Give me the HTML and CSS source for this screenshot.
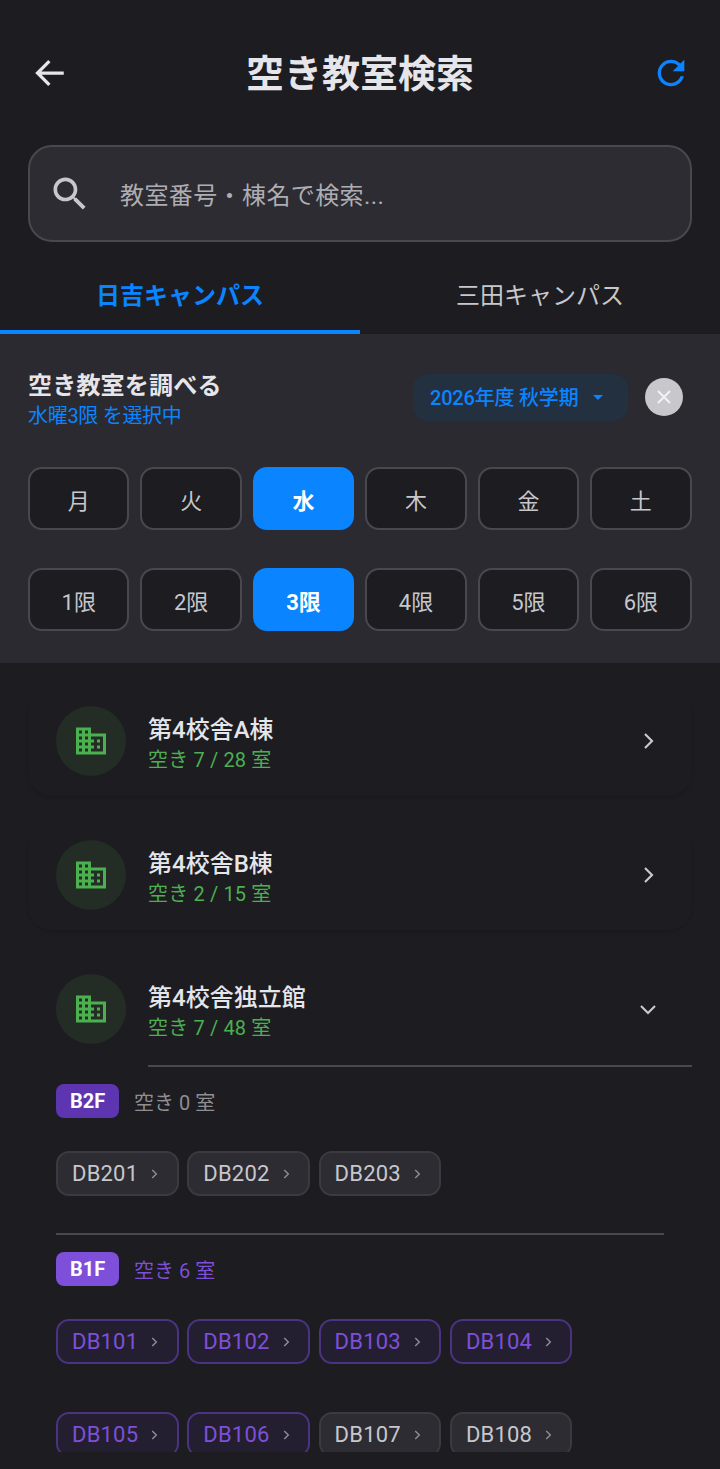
FILE: index.html
```html
<!DOCTYPE html>
<html lang="ja">
<head>
  <meta charset="UTF-8" />
  <meta name="viewport" content="width=device-width, initial-scale=1.0"/>
  <title>空き教室検索</title>
  <link rel="stylesheet" href="styles.css">
</head>
<body>
  <header class="topbar">
    <svg class="back-icon" viewBox="0 0 32 32"><path d="M27 16H6M15.5 6.5L6 16l9.5 9.5"/></svg>
    <h1>空き教室検索</h1>
    <svg class="refresh-icon" viewBox="0 0 24 24"><path d="M17.65 6.35C16.2 4.9 14.21 4 12 4c-4.42 0-7.99 3.58-7.99 8s3.57 8 7.99 8c3.73 0 6.84-2.55 7.73-6h-2.08c-.82 2.33-3.04 4-5.65 4-3.31 0-6-2.69-6-6s2.69-6 6-6c1.66 0 3.14.69 4.22 1.78L13 11h7V4l-2.35 2.35z"/></svg>
  </header>

  <div class="search">
    <svg class="search-icon" viewBox="0 0 24 24"><path d="M15.5 14h-.79l-.28-.27C15.41 12.59 16 11.11 16 9.5 16 5.91 13.09 3 9.5 3S3 5.91 3 9.5 5.91 16 9.5 16c1.61 0 3.09-.59 4.23-1.57l.27.28v.79l5 4.99L20.49 19l-4.99-5zm-6 0C7.01 14 5 11.99 5 9.5S7.01 5 9.5 5 14 7.01 14 9.5 11.99 14 9.5 14z"/></svg>
    <span>教室番号・棟名で検索...</span>
  </div>

  <nav class="tabs">
    <div class="tab active">日吉キャンパス</div>
    <div class="tab">三田キャンパス</div>
  </nav>

  <section class="panel">
    <div class="panel-head">
      <div class="panel-title">
        <h2>空き教室を調べる</h2>
        <p>水曜3限 を選択中</p>
      </div>
      <div class="term">2026年度 秋学期<i class="caret"></i></div>
      <div class="close">
        <svg viewBox="0 0 24 24"><path d="M6 6l12 12M18 6L6 18"/></svg>
      </div>
    </div>
    <div class="picker">
      <div class="pick">月</div>
      <div class="pick">火</div>
      <div class="pick on">水</div>
      <div class="pick">木</div>
      <div class="pick">金</div>
      <div class="pick">土</div>
    </div>
    <div class="picker">
      <div class="pick">1限</div>
      <div class="pick">2限</div>
      <div class="pick on">3限</div>
      <div class="pick">4限</div>
      <div class="pick">5限</div>
      <div class="pick">6限</div>
    </div>
  </section>

  <main class="list">
    <div class="card">
      <div class="card-head">
        <div class="bldg"><svg viewBox="0 0 24 24"><path d="M12 7V3H2v18h20V7H12zM6 19H4v-2h2v2zm0-4H4v-2h2v2zm0-4H4V9h2v2zm0-4H4V5h2v2zm4 12H8v-2h2v2zm0-4H8v-2h2v2zm0-4H8V9h2v2zm0-4H8V5h2v2zm10 12h-8v-2h2v-2h-2v-2h2v-2h-2V9h8v10zm-2-8h-2v2h2v-2zm0 4h-2v2h2v-2z"/></svg></div>
        <div class="card-text">
          <h3>第4校舎A棟</h3>
          <p>空き 7 / 28 室</p>
        </div>
        <svg class="chev" viewBox="0 0 24 24"><path d="M9 5l7 7-7 7"/></svg>
      </div>
    </div>

    <div class="card">
      <div class="card-head">
        <div class="bldg"><svg viewBox="0 0 24 24"><path d="M12 7V3H2v18h20V7H12zM6 19H4v-2h2v2zm0-4H4v-2h2v2zm0-4H4V9h2v2zm0-4H4V5h2v2zm4 12H8v-2h2v2zm0-4H8v-2h2v2zm0-4H8V9h2v2zm0-4H8V5h2v2zm10 12h-8v-2h2v-2h-2v-2h2v-2h-2V9h8v10zm-2-8h-2v2h2v-2zm0 4h-2v2h2v-2z"/></svg></div>
        <div class="card-text">
          <h3>第4校舎B棟</h3>
          <p>空き 2 / 15 室</p>
        </div>
        <svg class="chev" viewBox="0 0 24 24"><path d="M9 5l7 7-7 7"/></svg>
      </div>
    </div>

    <div class="card open">
      <div class="card-head">
        <div class="bldg"><svg viewBox="0 0 24 24"><path d="M12 7V3H2v18h20V7H12zM6 19H4v-2h2v2zm0-4H4v-2h2v2zm0-4H4V9h2v2zm0-4H4V5h2v2zm4 12H8v-2h2v2zm0-4H8v-2h2v2zm0-4H8V9h2v2zm0-4H8V5h2v2zm10 12h-8v-2h2v-2h-2v-2h2v-2h-2V9h8v10zm-2-8h-2v2h2v-2zm0 4h-2v2h2v-2z"/></svg></div>
        <div class="card-text">
          <h3>第4校舎独立館</h3>
          <p>空き 7 / 48 室</p>
        </div>
        <svg class="chev" viewBox="0 0 24 24"><path d="M5 9l7 7 7-7"/></svg>
      </div>
      <div class="card-rule"></div>

      <div class="floor">
        <div class="floor-head">
          <span class="badge b2">B2F</span>
          <span class="floor-count">空き 0 室</span>
        </div>
        <div class="rooms">
          <div class="room">DB201<svg viewBox="0 0 24 24"><path d="M9 5l7 7-7 7"/></svg></div>
          <div class="room">DB202<svg viewBox="0 0 24 24"><path d="M9 5l7 7-7 7"/></svg></div>
          <div class="room">DB203<svg viewBox="0 0 24 24"><path d="M9 5l7 7-7 7"/></svg></div>
        </div>
      </div>

      <div class="floor ruled">
        <div class="floor-head">
          <span class="badge b1">B1F</span>
          <span class="floor-count free">空き 6 室</span>
        </div>
        <div class="rooms">
          <div class="room free">DB101<svg viewBox="0 0 24 24"><path d="M9 5l7 7-7 7"/></svg></div>
          <div class="room free">DB102<svg viewBox="0 0 24 24"><path d="M9 5l7 7-7 7"/></svg></div>
          <div class="room free">DB103<svg viewBox="0 0 24 24"><path d="M9 5l7 7-7 7"/></svg></div>
          <div class="room free">DB104<svg viewBox="0 0 24 24"><path d="M9 5l7 7-7 7"/></svg></div>
          <div class="room free">DB105<svg viewBox="0 0 24 24"><path d="M9 5l7 7-7 7"/></svg></div>
          <div class="room free">DB106<svg viewBox="0 0 24 24"><path d="M9 5l7 7-7 7"/></svg></div>
          <div class="room">DB107<svg viewBox="0 0 24 24"><path d="M9 5l7 7-7 7"/></svg></div>
          <div class="room">DB108<svg viewBox="0 0 24 24"><path d="M9 5l7 7-7 7"/></svg></div>
        </div>
      </div>
    </div>
  </main>
</body>
</html>
```

FILE: styles.css
```css
* {
  box-sizing: border-box;
}

html, body {
  margin: 0;
  height: 1469px;
  overflow: hidden;
}

body {
  font-family: Roboto, "Noto Sans CJK JP", sans-serif;
  background-color: #1c1c21;
  color: #e5e5ea;
  display: flex;
  flex-direction: column;
  padding-bottom: 17px;
}

h1, h2, h3, p {
  margin: 0;
}

.topbar {
  height: 145px;
  padding: 0 29px 0 30px;
  display: flex;
  align-items: center;
  justify-content: space-between;
  position: relative;
}

.topbar h1 {
  font-size: 38px;
  font-weight: 700;
  line-height: 50px;
  position: absolute;
  left: 0;
  right: 0;
  top: 49px;
  text-align: center;
}

.back-icon {
  width: 40px;
  height: 40px;
  fill: none;
  stroke: #e5e5ea;
  stroke-width: 2.6;
}

.refresh-icon {
  width: 40px;
  height: 40px;
  fill: #0a84ff;
}

.search {
  height: 97px;
  margin: 0 28px;
  padding: 0 18px;
  background: #2c2c32;
  border: 2px solid #48484e;
  border-radius: 24px;
  display: flex;
  align-items: center;
  font-size: 24px;
  letter-spacing: 0.4px;
  color: #aeaeb2;
}

.search-icon {
  width: 44px;
  height: 44px;
  margin-right: 28px;
  fill: #c7c7cc;
}

.tabs {
  display: flex;
  height: 92px;
}

.tab {
  flex: 1;
  display: flex;
  align-items: center;
  justify-content: center;
  padding-top: 14px;
  font-size: 24px;
  color: #c7c7cc;
  border-bottom: 4px solid transparent;
}

.tab.active {
  color: #0a84ff;
  font-weight: 700;
  border-bottom-color: #0a84ff;
}

.panel {
  height: 329px;
  padding: 36px 28px 0;
  background: #2a2a30;
}

.panel-head {
  display: flex;
  align-items: flex-start;
  margin-bottom: 36px;
}

.panel-title {
  flex: 1;
  padding-top: 1px;
}

.panel-title h2 {
  font-size: 24px;
  font-weight: 700;
  line-height: 30px;
  letter-spacing: 0.2px;
}

.panel-title p {
  font-size: 20px;
  line-height: 30px;
  letter-spacing: -0.3px;
  color: #0a84ff;
}

.term {
  width: 215px;
  height: 47px;
  margin-top: 4px;
  background: #22303f;
  border-radius: 14px;
  display: flex;
  align-items: center;
  padding-left: 17px;
  font-size: 20px;
  font-weight: 500;
  letter-spacing: -0.2px;
  color: #0a84ff;
  line-height: 1;
}

.caret {
  margin-left: 15px;
  border-left: 5px solid transparent;
  border-right: 5px solid transparent;
  border-top: 5px solid #0a84ff;
}

.close {
  width: 38px;
  height: 38px;
  margin: 8px 9px 0 17px;
  border-radius: 50%;
  background: #c7c7cc;
  display: flex;
  align-items: center;
  justify-content: center;
}

.close svg {
  width: 24px;
  height: 24px;
  fill: none;
  stroke: #f2f2f7;
  stroke-width: 2;
}

.picker {
  display: flex;
  gap: 11px;
  margin-right: 0.5px;
  margin-bottom: 38px;
}

.pick {
  flex: 1;
  height: 63px;
  background: #1c1c21;
  border: 2px solid #48484e;
  border-radius: 14px;
  display: flex;
  align-items: center;
  justify-content: center;
  font-size: 22px;
  color: #c7c7cc;
}

.pick.on {
  background: #0a84ff;
  border-color: #0a84ff;
  color: #fff;
  font-weight: 700;
}

.list {
  flex: 1;
  min-height: 0;
  overflow: hidden;
  padding: 23px 28px 0;
}

.card {
  margin-bottom: 24px;
  border-radius: 24px;
  box-shadow: 0 2px 3px rgba(0, 0, 0, 0.1);
}

.card.open {
  box-shadow: none;
}

.card-head {
  height: 110px;
  padding: 20px 28px;
  display: flex;
  align-items: center;
}

.bldg {
  width: 70px;
  height: 70px;
  border-radius: 50%;
  background: #232d26;
  display: flex;
  align-items: center;
  justify-content: center;
  margin-right: 22px;
  flex-shrink: 0;
}

.bldg svg {
  width: 36px;
  height: 36px;
  fill: #4caf50;
}

.card-text {
  flex: 1;
  padding-top: 5px;
}

.card-text h3 {
  font-size: 24px;
  font-weight: 500;
  line-height: 32px;
}

.card-text p {
  font-size: 20px;
  line-height: 28px;
  letter-spacing: 0.15px;
  color: #4caf50;
}

.chev {
  width: 24px;
  height: 24px;
  margin-right: 4px;
  fill: none;
  stroke: #c7c7cc;
  stroke-width: 2.2;
}

.card-rule {
  height: 2px;
  margin: 1px 0 0 120px;
  background: #48484e;
}

.floor {
  margin: 0 28px;
  padding-top: 17px;
}

.floor.ruled {
  margin-top: 37px;
  border-top: 2px solid #48484e;
}

.floor-head {
  display: flex;
  align-items: center;
  gap: 15px;
  margin-bottom: 33px;
}

.badge {
  width: 63px;
  height: 34px;
  border-radius: 8px;
  display: flex;
  align-items: center;
  justify-content: center;
  font-size: 20px;
  font-weight: 700;
  color: #fff;
}

.badge.b2 {
  background: #5e35b1;
}

.badge.b1 {
  background: #7e4fd8;
}

.floor-count {
  font-size: 20px;
  color: #8e8e93;
}

.floor-count.free {
  color: #7e4fd8;
}

.rooms {
  display: flex;
  flex-wrap: wrap;
  gap: 48px 8.8px;
}

.room {
  width: 122.5px;
  height: 45px;
  padding-left: 14px;
  background: #2c2c32;
  border: 2px solid #3a3a40;
  border-radius: 13px;
  display: flex;
  align-items: center;
  font-size: 22px;
  letter-spacing: 0.2px;
  color: #c7c7cc;
}

.room svg {
  width: 14px;
  height: 14px;
  margin-left: 9px;
  fill: none;
  stroke: #8e8e93;
  stroke-width: 2.4;
}

.room.free {
  background: #241f30;
  border-color: #4a3380;
  color: #7e4fd8;
}
```
